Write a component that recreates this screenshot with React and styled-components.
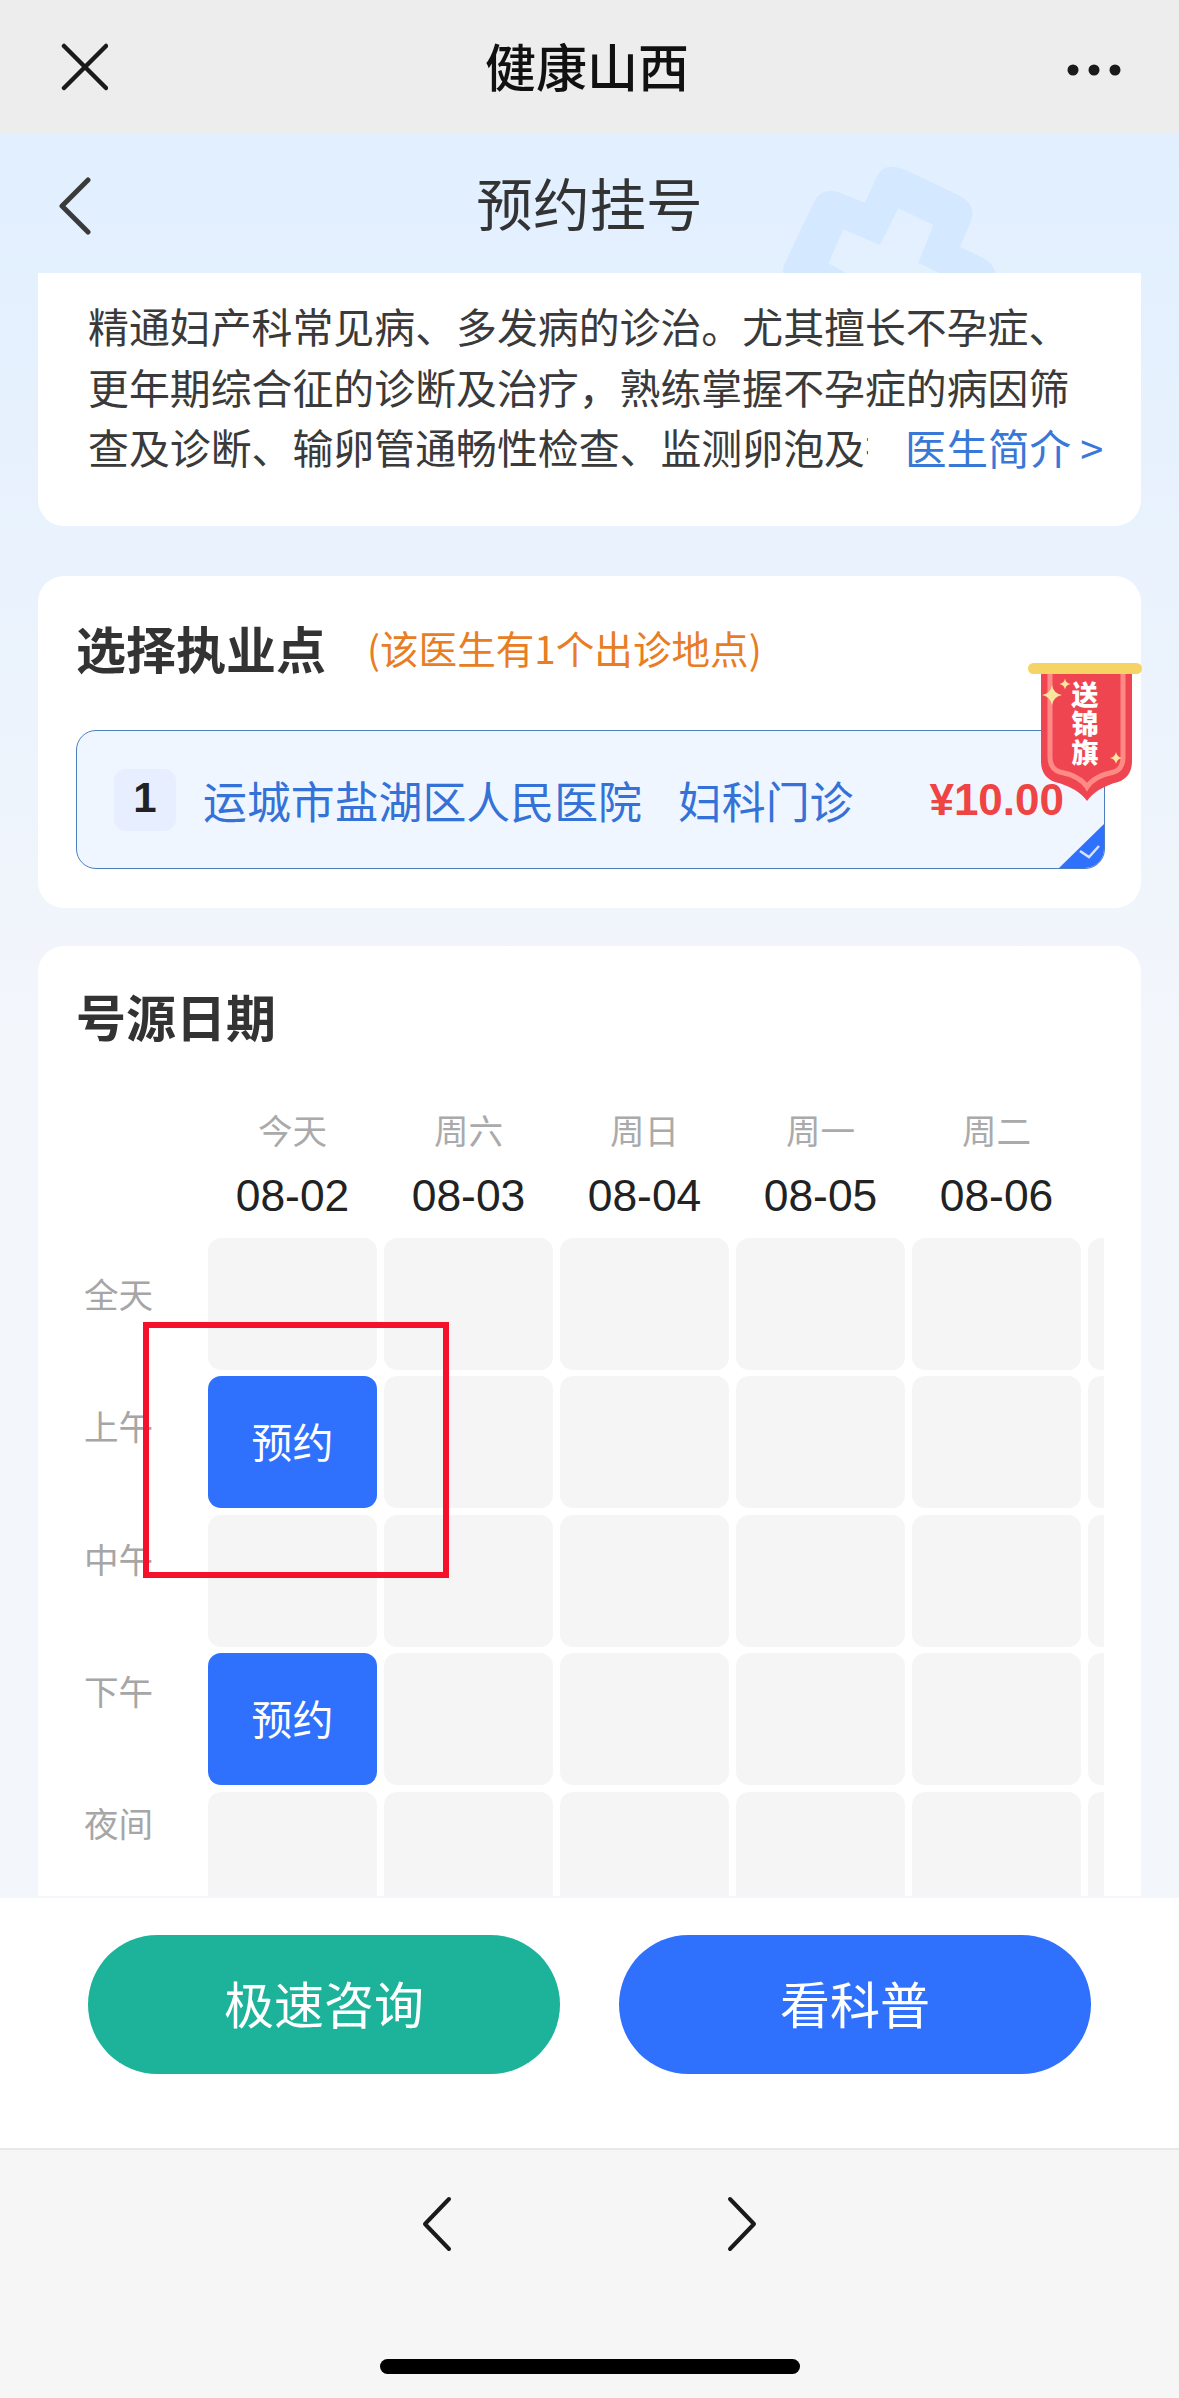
import React from 'react';
import styled, { createGlobalStyle } from 'styled-components';

const Global = createGlobalStyle`
  html, body { margin: 0; padding: 0; background: #f6f6f6; }
  * { box-sizing: border-box; }
  body { font-family: "Noto Sans CJK SC", "Inter", sans-serif; }
`;

const Screen = styled.div`
  position: relative;
  width: 1179px;
  height: 2398px;
  overflow: hidden;
  display: flex;
  flex-direction: column;
`;

const NavBar = styled.header`
  height: 134px;
  flex: none;
  background: #ededed;
  display: flex;
  align-items: center;
  justify-content: space-between;
  padding: 0 57px 0 60px;
  position: relative;
`;

const NavTitle = styled.div`
  position: absolute;
  left: 0;
  right: 5px;
  text-align: center;
  font-size: 51px;
  line-height: 60px;
  font-weight: 500;
  color: #111;
  top: 35px;
`;

const NavDots = styled.svg`
  margin-top: 6px;
`;

const Page = styled.main`
  flex: 1;
  min-height: 0;
  position: relative;
  display: flex;
  flex-direction: column;
  background: linear-gradient(180deg, #e1efff 0, #f3f6fb 900px);
`;

const PageHeader = styled.div`
  height: 139px;
  flex: none;
  position: relative;
  display: flex;
  align-items: center;
  justify-content: center;
`;

const BackButton = styled.div`
  position: absolute;
  left: 59px;
  top: 43px;
  display: flex;
`;

const PageTitle = styled.h1`
  margin: 0 0 6px;
  font-size: 56.6px;
  line-height: 70px;
  font-weight: 400;
  color: #333;
`;

const Watermark = styled.svg`
  position: absolute;
  left: 700px;
  top: -4px;
`;

const Scroll = styled.div`
  flex: 1;
  min-height: 0;
  overflow: hidden;
  margin-bottom: 2px;
  padding: 0 38px;
  display: flex;
  flex-direction: column;
  position: relative;
`;

const Card = styled.section`
  flex: none;
  background: #fff;
  border-radius: 26px;
  padding: ${p => p.$padding};
  margin-bottom: ${p => p.$after || 0}px;
  position: relative;
`;

const IntroCard = styled(Card)`
  border-radius: 0 0 26px 26px;
  height: 253px;
`;

const Line = styled.div`
  font-size: 40.9px;
  line-height: 60.5px;
  color: #3a3a3a;
  white-space: nowrap;
  display: flex;
`;

const Clipped = styled.span`
  width: 780px;
  overflow: hidden;
  flex: none;
`;

const More = styled.span`
  margin-left: 37px;
  color: #3a78d8;
  flex: none;
  font-size: 41.5px;
`;

const TitleRow = styled.div`
  display: flex;
  align-items: center;
  height: 60px;
`;

const CardTitle = styled.h2`
  margin: 0 0 5px;
  font-size: 50px;
  line-height: 55px;
  font-weight: 700;
  color: #333;
`;

const Hint = styled.span`
  margin: 0 0 5px 41px;
  font-size: 38.6px;
  line-height: 55px;
  color: #e87d23;
  white-space: nowrap;
`;

const PlaceBox = styled.div`
  margin-top: 50px;
  height: 139px;
  width: 1029px;
  border: 1.5px solid #4b7fbf;
  border-radius: 20px;
  background: #f0f6ff;
  display: flex;
  align-items: center;
  padding: 0 40px 0 37px;
  position: relative;
  overflow: hidden;
`;

const IndexBadge = styled.div`
  width: 62px;
  height: 62px;
  border-radius: 12px;
  background: #e6eeff;
  display: flex;
  align-items: center;
  justify-content: center;
  font-family: "Liberation Sans", sans-serif;
  font-weight: 700;
  font-size: 42px;
  color: #222;
  padding-bottom: 4px;
`;

const PlaceText = styled.span`
  font-size: 43.9px;
  line-height: 60px;
  color: #3472d8;
  white-space: nowrap;
  margin-left: ${p => p.$gap}px;
`;

const Price = styled.span`
  margin-left: auto;
  font-family: "Liberation Sans", sans-serif;
  font-size: 44px;
  font-weight: 700;
  color: #ef4444;
  position: relative;
  z-index: 2;
`;

const CheckCorner = styled.svg`
  position: absolute;
  right: 0;
  bottom: 0;
`;

const Ribbon = styled.svg`
  position: absolute;
  left: 990px;
  top: 87px;
  overflow: visible;
`;

const RibbonWord = styled.text`
  font-family: "Noto Sans CJK SC", sans-serif;
  font-weight: 900;
  font-size: 27px;
  fill: #fff;
  text-anchor: middle;
`;

const DayHeader = styled.div`
  margin-top: 64px;
  padding-left: 132px;
  display: grid;
  grid-template-columns: repeat(5, 169px);
  column-gap: 7px;
  height: 123px;
`;

const Day = styled.div`
  display: flex;
  flex-direction: column;
  align-items: center;
`;

const DayName = styled.span`
  font-size: 34.6px;
  line-height: 44px;
  color: #aaa;
`;

const DayDate = styled.span`
  margin-top: 20px;
  font-family: "Liberation Sans", sans-serif;
  font-size: 44.4px;
  line-height: 50px;
  color: #222;
`;

const Schedule = styled.div`
  display: flex;
  align-items: flex-start;
`;

const Periods = styled.div`
  width: 132px;
  flex: none;
  display: flex;
  flex-direction: column;
`;

const Period = styled.div`
  height: 132.3px;
  display: flex;
  align-items: center;
  padding: 0 0 6px 8px;
  font-size: 34.6px;
  color: #a6a6a6;
`;

const Slots = styled.div`
  width: 896px;
  overflow: hidden;
  padding-top: 8px;
  display: grid;
  grid-template-columns: repeat(6, 169px);
  grid-auto-rows: 132px;
  column-gap: 7px;
  row-gap: 6.4px;
`;

const Slot = styled.div`
  border-radius: 13px;
  background: ${p => (p.$open ? '#2f71fd' : '#f5f5f5')};
  color: #fff;
  font-size: 40.9px;
  display: flex;
  align-items: center;
  justify-content: center;
  padding-bottom: 3px;
`;

const Footer = styled.div`
  height: 250px;
  flex: none;
  background: #fff;
  padding: 37px 88px 0;
  display: flex;
  align-items: flex-start;
  gap: 59px;
`;

const Action = styled.button`
  flex: 1;
  height: 139px;
  border: 0;
  border-radius: 70px;
  background: ${p => p.$color};
  color: #fff;
  font: 400 50px "Noto Sans CJK SC", sans-serif;
  padding: 0 0 6px;
`;

const BrowserBar = styled.nav`
  height: 250px;
  flex: none;
  background: #f6f6f6;
  border-top: 2px solid #e8e8e8;
  display: flex;
  flex-direction: column;
  align-items: center;
  padding-top: 46px;
`;

const Arrows = styled.div`
  display: flex;
  gap: 275px;
`;

const HomeBar = styled.div`
  width: 420px;
  height: 15px;
  border-radius: 8px;
  background: #000;
  margin-top: auto;
  margin-bottom: 24px;
`;

const Annotation = styled.div`
  position: absolute;
  left: 143px;
  top: 1322px;
  width: 306px;
  height: 256px;
  border: 6.5px solid #f5102c;
  pointer-events: none;
`;

const Chevron = ({ dir = 'left', color = '#1a1a1a', w = 30, h = 56, sw = 4 }) => (
  <svg width={w} height={h} viewBox={`0 0 ${w} ${h}`} fill="none">
    <path
      d={dir === 'left'
        ? `M${w - 3} 3 L3 ${h / 2} L${w - 3} ${h - 3}`
        : `M3 3 L${w - 3} ${h / 2} L3 ${h - 3}`}
      stroke={color}
      strokeWidth={sw}
      strokeLinecap="round"
      strokeLinejoin="round"
    />
  </svg>
);

const days = [
  ['今天', '08-02'],
  ['周六', '08-03'],
  ['周日', '08-04'],
  ['周一', '08-05'],
  ['周二', '08-06'],
];
const periods = ['全天', '上午', '中午', '下午', '夜间'];
const open = new Set(['1-0', '3-0']);

const Star = ({ x, y, r }) => (
  <path
    d={`M${x} ${y - r} Q${x + r * 0.15} ${y - r * 0.15} ${x + r} ${y} Q${x + r * 0.15} ${y + r * 0.15} ${x} ${y + r} Q${x - r * 0.15} ${y + r * 0.15} ${x - r} ${y} Q${x - r * 0.15} ${y - r * 0.15} ${x} ${y - r}Z`}
    fill="#fbe6a0"
  />
);

export default function App() {
  return (
    <Screen>
      <Global />
      <NavBar>
        <svg width="48" height="48" viewBox="0 0 48 48" fill="none">
          <path d="M4 3 L46 45 M46 3 L4 45" stroke="#1a1a1a" strokeWidth="4.5" strokeLinecap="round" />
        </svg>
        <NavTitle>健康山西</NavTitle>
        <NavDots width="56" height="14" viewBox="0 0 56 14">
          <circle cx="7" cy="7" r="5.5" fill="#1a1a1a" />
          <circle cx="28" cy="7" r="5.5" fill="#1a1a1a" />
          <circle cx="49" cy="7" r="5.5" fill="#1a1a1a" />
        </NavDots>
      </NavBar>
      <Page>
        <PageHeader>
          <Watermark width="400" height="160" viewBox="0 0 1200 480">
            <path
              fillRule="evenodd"
              fill="#d4e8ff"
              d="M340 220 Q360 170 415 187 L495 218 L530 140 Q552 95 612 118 L775 195 Q832 225 812 275 L780 350 L850 385 Q882 400 890 440 L890 480 L250 480 L250 410 Z M430 298 L540 345 L595 235 L700 285 L655 398 L730 435 L730 480 L440 480 L440 430 L385 400 Z"
            />
          </Watermark>
          <BackButton>
            <Chevron color="#3a3a3a" w={32} h={58} sw={5} />
          </BackButton>
          <PageTitle>预约挂号</PageTitle>
        </PageHeader>
        <Scroll>
          <IntroCard $padding="23px 50px 0" $after={50}>
            <Line>精通妇产科常见病、多发病的诊治。尤其擅长不孕症、</Line>
            <Line>更年期综合征的诊断及治疗，熟练掌握不孕症的病因筛</Line>
            <Line>
              <Clipped>查及诊断、输卵管通畅性检查、监测卵泡及排卵</Clipped>
              <More>医生简介 &gt;</More>
            </Line>
          </IntroCard>
          <Card $padding="44px 37px 39px 38px" $after={38}>
            <TitleRow>
              <CardTitle>选择执业点</CardTitle>
              <Hint>(该医生有1个出诊地点)</Hint>
            </TitleRow>
            <PlaceBox>
              <IndexBadge>1</IndexBadge>
              <PlaceText $gap={27}>运城市盐湖区人民医院</PlaceText>
              <PlaceText $gap={36}>妇科门诊</PlaceText>
              <Price>¥10.00</Price>
              <CheckCorner width="45" height="44" viewBox="0 0 45 44">
                <path d="M45 0 L45 44 L0 44 Z" fill="#2f71fd" />
                <path d="M21 27 L30 33 L40 22" fill="none" stroke="#d5e3ff" strokeWidth="2.5" />
              </CheckCorner>
            </PlaceBox>
            <Ribbon width="114" height="138" viewBox="0 0 114 138">
              <path d="M13 8 H104 V98 Q104 114 90 119 Q68 125 59 138 Q50 125 27 119 Q13 114 13 98 Z" fill="#ee4550" />
              <path d="M22 10 V94 Q22 106 32 109 Q52 113 59 124 Q66 113 86 109 Q95 106 95 94 V10" fill="none" stroke="#ff8a85" strokeWidth="5" />
              <rect x="0" y="0" width="114" height="11" rx="5.5" fill="#f6d365" />
              <Star x={24} y={32} r={10} />
              <Star x={37} y={21} r={5.5} />
              <Star x={88} y={95} r={6} />
              <RibbonWord x="57" y="42">送</RibbonWord>
              <RibbonWord x="57" y="71">锦</RibbonWord>
              <RibbonWord x="57" y="100">旗</RibbonWord>
            </Ribbon>
          </Card>
          <Card $padding="42px 37px 0 38px">
            <CardTitle>号源日期</CardTitle>
            <DayHeader>
              {days.map(([name, date]) => (
                <Day key={date}>
                  <DayName>{name}</DayName>
                  <DayDate>{date}</DayDate>
                </Day>
              ))}
            </DayHeader>
            <Schedule>
              <Periods>
                {periods.map(p => <Period key={p}>{p}</Period>)}
              </Periods>
              <Slots>
                {periods.flatMap((p, r) =>
                  [0, 1, 2, 3, 4, 5].map(c => {
                    const isOpen = open.has(`${r}-${c}`);
                    return <Slot key={`${r}-${c}`} $open={isOpen}>{isOpen ? '预约' : ''}</Slot>;
                  })
                )}
              </Slots>
            </Schedule>
          </Card>
        </Scroll>
        <Footer>
          <Action $color="#1cb39a">极速咨询</Action>
          <Action $color="#2f71fd">看科普</Action>
        </Footer>
        <BrowserBar>
          <Arrows>
            <Chevron dir="left" />
            <Chevron dir="right" />
          </Arrows>
          <HomeBar />
        </BrowserBar>
      </Page>
      <Annotation />
    </Screen>
  );
}
